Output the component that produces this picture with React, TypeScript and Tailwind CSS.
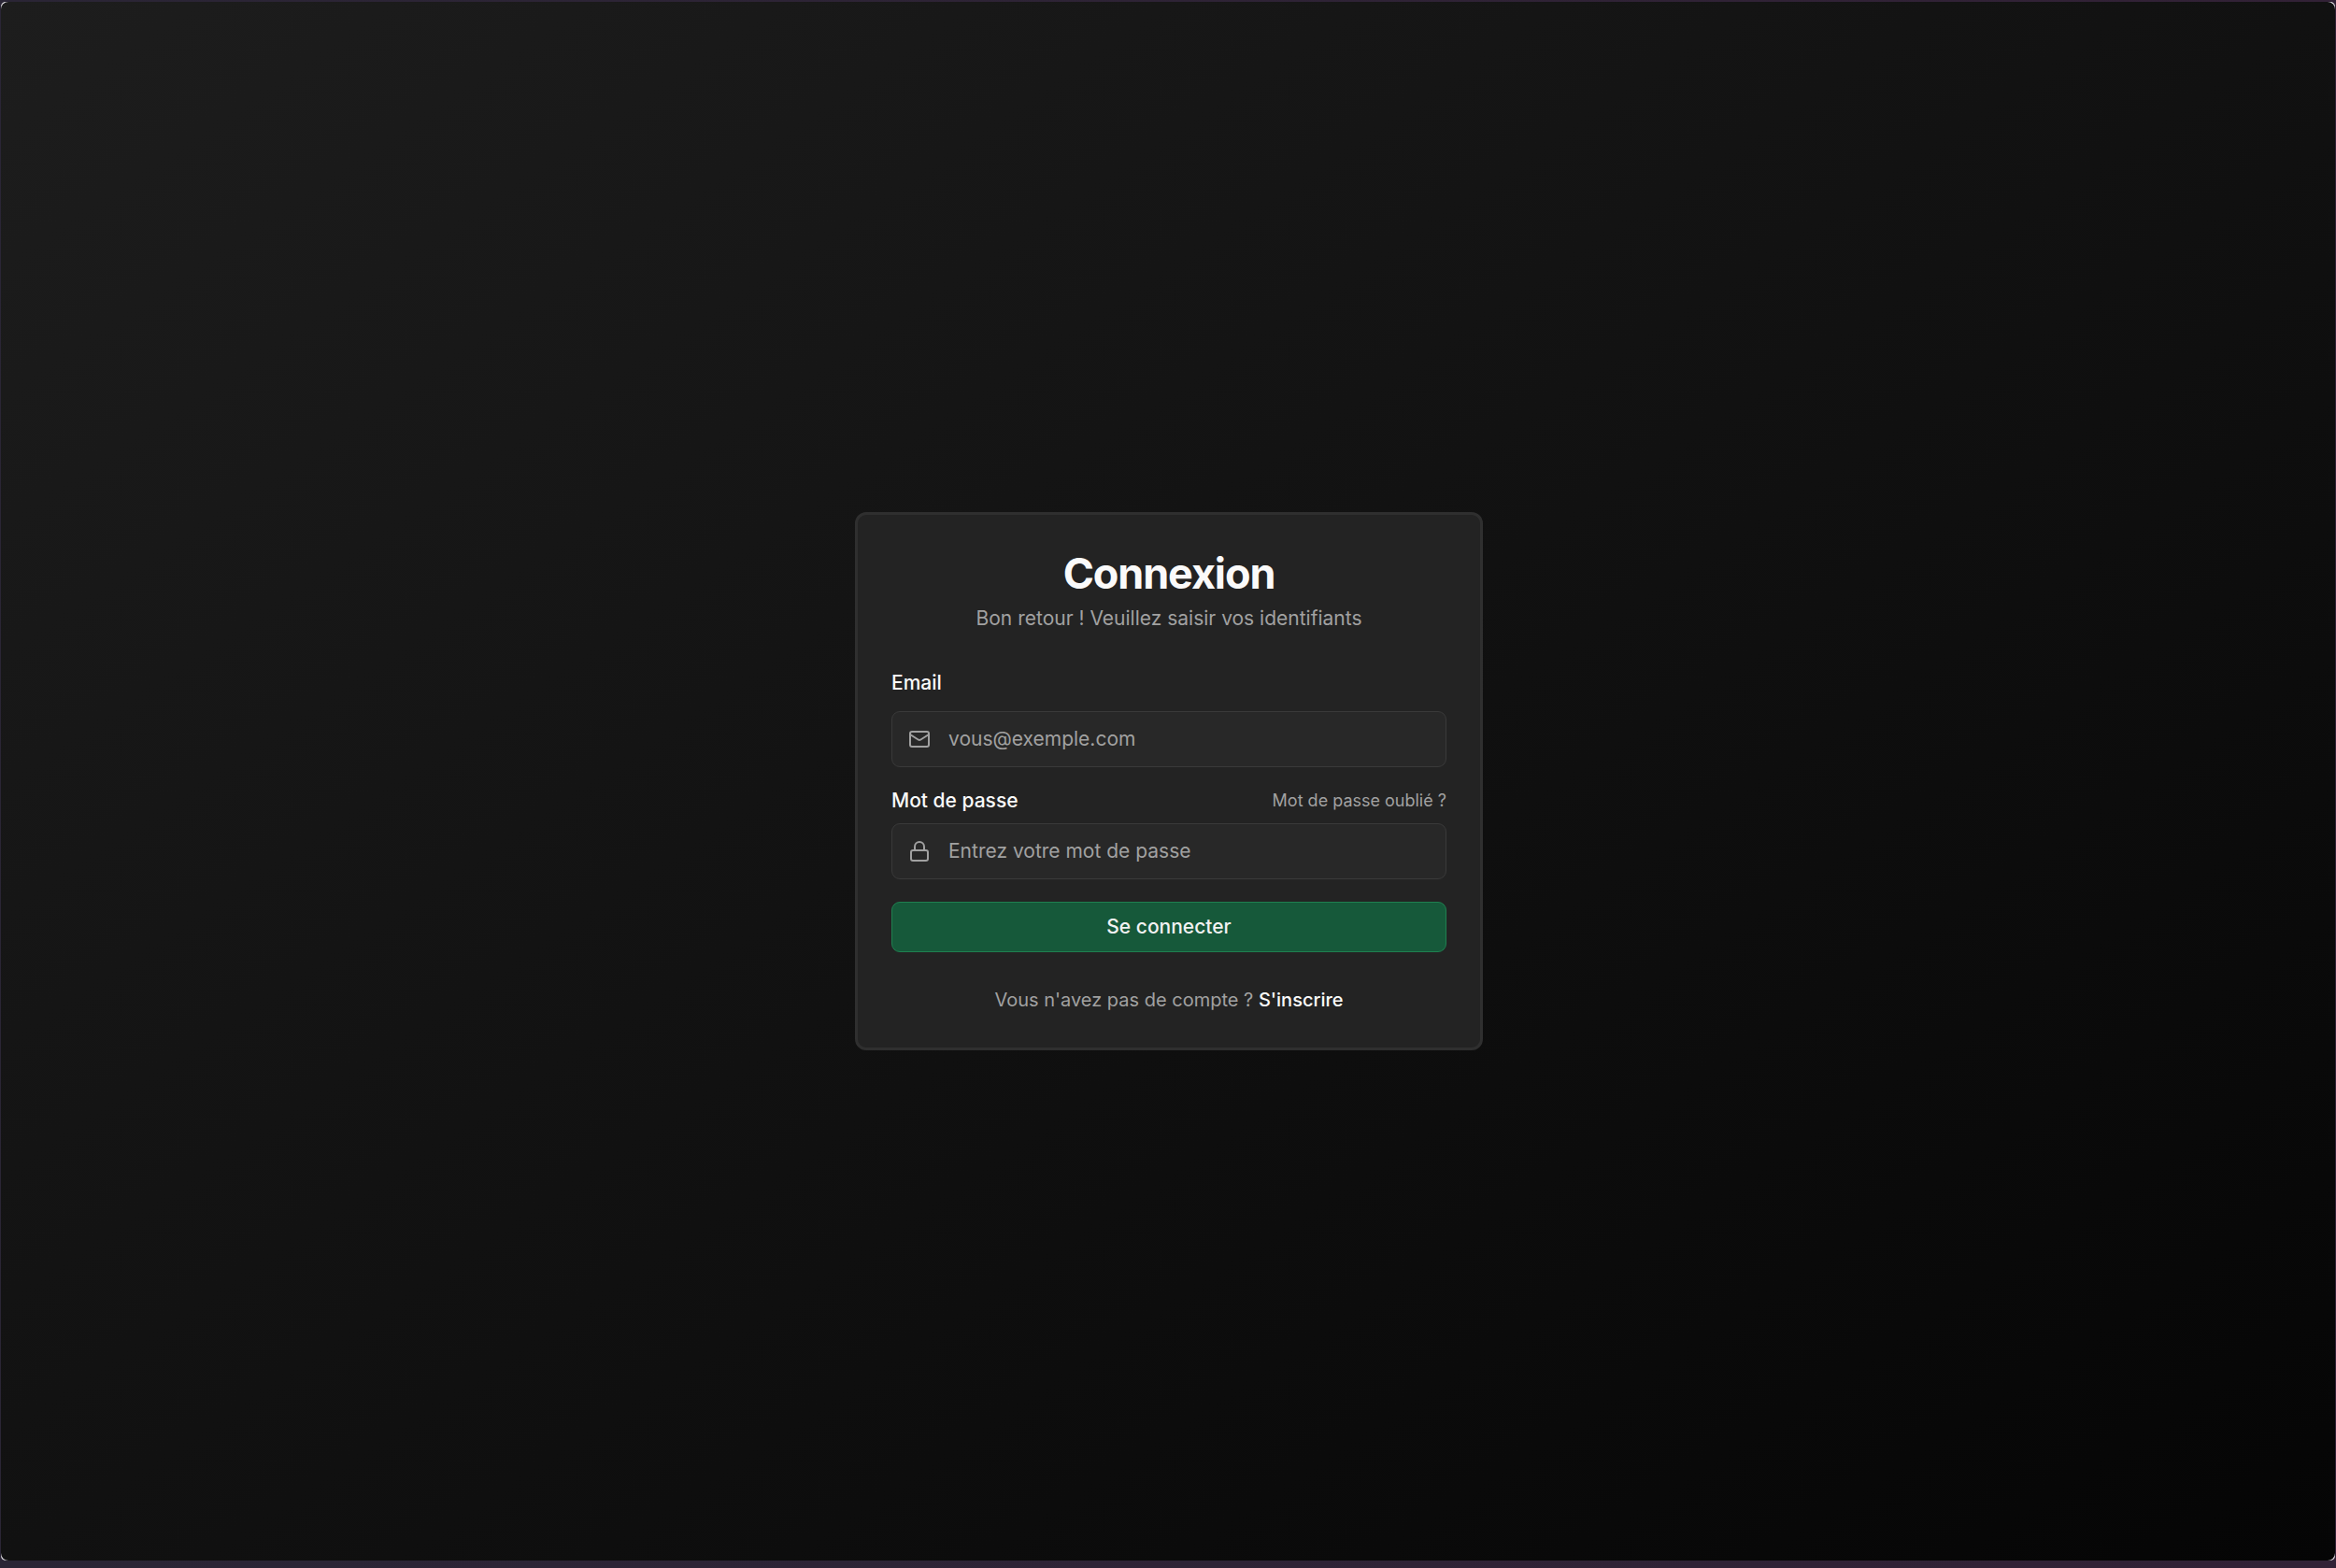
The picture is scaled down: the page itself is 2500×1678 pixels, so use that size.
import { Lock, Mail, type LucideIcon } from "lucide-react";

type FieldProps = {
  id: string;
  type: string;
  placeholder: string;
  icon: LucideIcon;
};

function Field({ id, type, placeholder, icon: Icon }: FieldProps) {
  return (
    <div className="relative">
      <Icon
        aria-hidden="true"
        className="pointer-events-none absolute inset-y-0 left-[18px] my-auto size-6 text-[#a1a1a1]"
      />
      <input
        id={id}
        type={type}
        placeholder={placeholder}
        className="block h-[60px] w-full rounded-[9px] border border-[#3a3a3a] bg-[#282828] pr-4 pb-0.5 pl-[60px] text-[21px] text-[#fafafa] outline-none placeholder:text-[#a1a1a1] focus:border-[#5a5a5a]"
      />
    </div>
  );
}

export default function App() {
  return (
    <div className="flex min-h-screen flex-col bg-linear-to-r from-[#2a2535] to-[#322136] px-px pt-0.5 pb-2 font-['Inter',sans-serif]">
      <div className="flex grow flex-col rounded-[5px] bg-[#e4e2e6]">
        <main className="flex grow items-center justify-center rounded-lg bg-linear-to-br/srgb from-[#1d1d1d] to-[#050505] pl-0.5">
          <section className="w-full max-w-[672px] rounded-xl border-[3px] border-[#2f2f2f] bg-[#232323] p-9">
            <header className="flex flex-col gap-1.5 text-center">
              <h1 className="text-[45px] leading-[54px] font-bold tracking-tight text-[#fafafa]">
                Connexion
              </h1>
              <p className="text-[21px] leading-[30px] text-[#a1a1a1]">
                Bon retour ! Veuillez saisir vos identifiants
              </p>
            </header>

            <form className="mt-9 flex flex-col gap-6" onSubmit={(e) => e.preventDefault()}>
              <div className="flex flex-col gap-3">
                <label htmlFor="email" className="text-[21px] leading-9 font-medium text-[#fafafa]">
                  Email
                </label>
                <Field id="email" type="email" placeholder="vous@exemple.com" icon={Mail} />
              </div>
              <div className="flex flex-col gap-3">
                <div className="flex items-center justify-between">
                  <label htmlFor="password" className="text-[21px] leading-6 font-medium text-[#fafafa]">
                    Mot de passe
                  </label>
                  <a href="#oubli" className="text-lg leading-6 text-[#a1a1a1]">
                    Mot de passe oublié ?
                  </a>
                </div>
                <Field id="password" type="password" placeholder="Entrez votre mot de passe" icon={Lock} />
              </div>
              <button
                type="submit"
                className="h-[54px] rounded-[9px] border border-[#1f8050] bg-[#16593a] text-[21px] font-medium text-[#f2f2f2]"
              >
                Se connecter
              </button>
            </form>

            <p className="mt-9 text-center text-xl leading-[30px] text-[#a1a1a1]">
              Vous n'avez pas de compte ?{" "}
              <a href="#inscription" className="font-medium text-[#fafafa]">
                S'inscrire
              </a>
            </p>
          </section>
        </main>
      </div>
    </div>
  );
}
